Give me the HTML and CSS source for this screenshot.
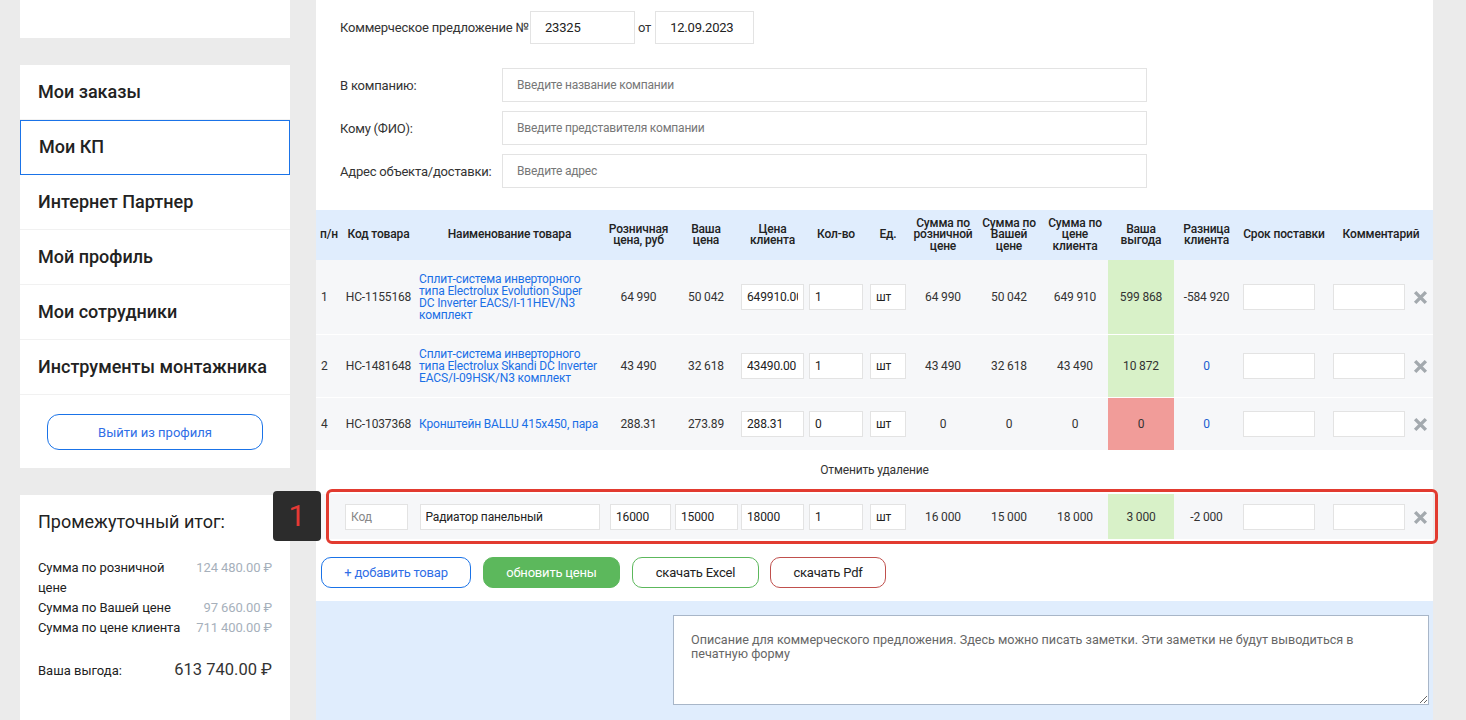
FILE: index.html
```html
<!DOCTYPE html>
<html lang="ru">
<head>
<meta charset="utf-8">
<title>Мои КП</title>
<link rel="stylesheet" href="styles.css">
</head>
<body>
<div class="page">
  <aside class="sidebar">
    <div class="card top-card"></div>
    <nav class="card menu">
      <a class="menu-item">Мои заказы</a>
      <a class="menu-item active">Мои КП</a>
      <a class="menu-item">Интернет Партнер</a>
      <a class="menu-item">Мой профиль</a>
      <a class="menu-item">Мои сотрудники</a>
      <a class="menu-item">Инструменты монтажника</a>
      <div class="logout-wrap"><button class="logout">Выйти из профиля</button></div>
    </nav>
    <div class="card subtotal">
      <div class="subtotal-title">Промежуточный итог:</div>
      <div class="sum-grid">
        <span class="sum-label">Сумма по розничной цене</span><span class="sum-val">124 480.00 ₽</span>
        <span class="sum-label">Сумма по Вашей цене</span><span class="sum-val">97 660.00 ₽</span>
        <span class="sum-label">Сумма по цене клиента</span><span class="sum-val">711 400.00 ₽</span>
      </div>
      <div class="benefit">
        <span class="benefit-label">Ваша выгода:</span>
        <span class="benefit-val">613 740.00 ₽</span>
      </div>
    </div>
  </aside>

  <main class="main">
    <div class="form">
      <div class="kp-row">
        <span class="kp-label">Коммерческое предложение №</span>
        <input class="field kp-num" value="23325">
        <span class="kp-ot">от</span>
        <input class="field kp-date" value="12.09.2023">
      </div>
      <div class="form-grid">
        <label class="f-label">В компанию:</label>
        <input class="field wide" placeholder="Введите название компании">
        <label class="f-label">Кому (ФИО):</label>
        <input class="field wide" placeholder="Введите представителя компании">
        <label class="f-label">Адрес объекта/доставки:</label>
        <input class="field wide" placeholder="Введите адрес">
      </div>
    </div>

    <table class="grid">
      <colgroup>
        <col class="c-n"><col class="c-code"><col class="c-name"><col class="c-ret"><col class="c-your"><col class="c-cli">
        <col class="c-qty"><col class="c-unit"><col class="c-s1"><col class="c-s2"><col class="c-s3"><col class="c-ben">
        <col class="c-diff"><col class="c-term"><col class="c-com">
      </colgroup>
      <thead>
        <tr>
          <th class="t-left">п/н</th>
          <th>Код товара</th>
          <th>Наименование товара</th>
          <th>Розничная цена, руб</th>
          <th class="tight">Ваша цена</th>
          <th>Цена клиента</th>
          <th>Кол-во</th>
          <th>Ед.</th>
          <th>Сумма по розничной цене</th>
          <th>Сумма по Вашей цене</th>
          <th>Сумма по цене клиента</th>
          <th>Ваша выгода</th>
          <th>Разница клиента</th>
          <th>Срок поставки</th>
          <th>Комментарий</th>
        </tr>
      </thead>
      <tbody>
        <tr>
          <td class="num">1</td>
          <td>НС-1155168</td>
          <td class="name"><a>Сплит-система инверторного типа Electrolux Evolution Super DC Inverter EACS/I-11HEV/N3 комплект</a></td>
          <td>64 990</td>
          <td>50 042</td>
          <td><input class="cell-in w-price" value="649910.00"></td>
          <td><input class="cell-in w-qty" value="1"></td>
          <td><input class="cell-in w-unit" value="шт"></td>
          <td>64 990</td>
          <td>50 042</td>
          <td>649 910</td>
          <td class="good">599 868</td>
          <td>-584 920</td>
          <td class="t-left pad4"><input class="cell-in w-text"></td>
          <td class="t-left pad4"><div class="com"><input class="cell-in w-text"><svg class="del" viewBox="0 0 14 14" width="15" height="15"><path d="M2 2L12 12M12 2L2 12" stroke="#a3a9ae" stroke-width="3.2"/></svg></div></td>
        </tr>
        <tr>
          <td class="num">2</td>
          <td>НС-1481648</td>
          <td class="name"><a>Сплит-система инверторного типа Electrolux Skandi DC Inverter EACS/I-09HSK/N3 комплект</a></td>
          <td>43 490</td>
          <td>32 618</td>
          <td><input class="cell-in w-price" value="43490.00"></td>
          <td><input class="cell-in w-qty" value="1"></td>
          <td><input class="cell-in w-unit" value="шт"></td>
          <td>43 490</td>
          <td>32 618</td>
          <td>43 490</td>
          <td class="good">10 872</td>
          <td class="blue">0</td>
          <td class="t-left pad4"><input class="cell-in w-text"></td>
          <td class="t-left pad4"><div class="com"><input class="cell-in w-text"><svg class="del" viewBox="0 0 14 14" width="15" height="15"><path d="M2 2L12 12M12 2L2 12" stroke="#a3a9ae" stroke-width="3.2"/></svg></div></td>
        </tr>
        <tr>
          <td class="num">4</td>
          <td>НС-1037368</td>
          <td class="name one-line"><a>Кронштейн BALLU 415x450, пара</a></td>
          <td>288.31</td>
          <td>273.89</td>
          <td><input class="cell-in w-price" value="288.31"></td>
          <td><input class="cell-in w-qty" value="0"></td>
          <td><input class="cell-in w-unit" value="шт"></td>
          <td>0</td>
          <td>0</td>
          <td>0</td>
          <td class="bad">0</td>
          <td class="blue">0</td>
          <td class="t-left pad4"><input class="cell-in w-text"></td>
          <td class="t-left pad4"><div class="com"><input class="cell-in w-text"><svg class="del" viewBox="0 0 14 14" width="15" height="15"><path d="M2 2L12 12M12 2L2 12" stroke="#a3a9ae" stroke-width="3.2"/></svg></div></td>
        </tr>
      </tbody>
    </table>

    <div class="undo">Отменить удаление</div>

    <table class="grid new-grid">
      <colgroup>
        <col class="c-n"><col class="c-code"><col class="c-name"><col class="c-ret"><col class="c-your"><col class="c-cli">
        <col class="c-qty"><col class="c-unit"><col class="c-s1"><col class="c-s2"><col class="c-s3"><col class="c-ben">
        <col class="c-diff"><col class="c-term"><col class="c-com">
      </colgroup>
      <tbody>
        <tr class="new-row">
          <td></td>
          <td class="code-cell"><input class="cell-in w-code" placeholder="Код"></td>
          <td><input class="cell-in w-name" value="Радиатор панельный"></td>
          <td class="np-cell"><input class="cell-in w-np" value="16000"></td>
          <td><input class="cell-in w-price" value="15000"></td>
          <td><input class="cell-in w-price" value="18000"></td>
          <td><input class="cell-in w-qty" value="1"></td>
          <td><input class="cell-in w-unit" value="шт"></td>
          <td>16 000</td>
          <td>15 000</td>
          <td>18 000</td>
          <td class="good">3 000</td>
          <td>-2 000</td>
          <td class="t-left pad4"><input class="cell-in w-text"></td>
          <td class="t-left pad4"><div class="com"><input class="cell-in w-text"><svg class="del" viewBox="0 0 14 14" width="15" height="15"><path d="M2 2L12 12M12 2L2 12" stroke="#a3a9ae" stroke-width="3.2"/></svg></div></td>
        </tr>
      </tbody>
    </table>

    <div class="actions">
      <button class="btn btn-add">+ добавить товар</button>
      <button class="btn btn-update">обновить цены</button>
      <button class="btn btn-excel">скачать Excel</button>
      <button class="btn btn-pdf">скачать Pdf</button>
    </div>

    <div class="notes">
      <textarea class="notes-area" placeholder="Описание для коммерческого предложения. Здесь можно писать заметки. Эти заметки не будут выводиться в печатную форму"></textarea>
    </div>

    <div class="mark-box"></div>
    <div class="mark-badge">1</div>
  </main>
</div>
</body>
</html>
```

FILE: styles.css
```css
* { box-sizing: border-box; }
html, body { margin: 0; height: 720px; overflow: hidden; }
body {
  background: #ebebeb;
  font-family: Roboto, "Liberation Sans", sans-serif;
  color: #222;
}
.page {
  display: flex;
  align-items: flex-start;
  gap: 26px;
  padding-left: 20px;
}

/* Sidebar */
.sidebar {
  width: 270px;
  display: flex;
  flex-direction: column;
  gap: 27px;
}
.card { background: #fff; }
.top-card { height: 38px; }
.menu { display: flex; flex-direction: column; }
.menu-item {
  height: 55px;
  display: flex;
  align-items: center;
  padding-left: 18px;
  padding-bottom: 2px;
  font-size: 18px;
  font-weight: 500;
  color: #222;
  border-bottom: 1px solid #f1f1f1;
}
.menu-item.active {
  border: 1px solid #1a73e8;
  padding-left: 18px;
}
.logout-wrap { padding: 19px 27px 18px; }
.logout {
  width: 216px;
  height: 36px;
  border: 1px solid #1a73e8;
  border-radius: 12px;
  background: #fff;
  color: #2f6ee6;
  font-family: Roboto, sans-serif;
  font-size: 13px;
}
.subtotal {
  padding: 16px 18px 0 18px;
  height: 260px;
}
.subtotal-title {
  font-size: 18px;
  line-height: 22px;
  color: #222;
}
.sum-grid {
  margin-top: 25px;
  display: grid;
  grid-template-columns: 150px 1fr;
  font-size: 13px;
  line-height: 20px;
  letter-spacing: -0.1px;
}
.sum-label { color: #222; }
.sum-val { text-align: right; color: #a6b0bb; white-space: nowrap; }
.benefit {
  margin-top: 21px;
  display: flex;
  justify-content: space-between;
  align-items: center;
}
.benefit-label { font-size: 13px; }
.benefit-val { font-size: 16.5px; line-height: 22px; color: #333; }

/* Main */
.main {
  width: 1117px;
  background: #fff;
  position: relative;
}
.form { padding: 11px 0 0 24px; letter-spacing: -0.2px; }
.kp-row {
  display: flex;
  align-items: center;
  height: 33px;
  font-size: 13px;
  color: #333;
}
.kp-label { width: 190px; white-space: nowrap; }
.field {
  border: 1px solid #e3e3e3;
  background: #fff;
  font-family: Roboto, sans-serif;
  font-size: 13px;
  color: #222;
  padding: 0 14px;
  outline: none;
  letter-spacing: -0.2px;
}
.kp-num { width: 105px; height: 33px; }
.kp-ot { margin: 0 4px 0 3px; }
.kp-date { width: 99px; height: 33px; }
.form-grid {
  margin-top: 24px;
  display: grid;
  grid-template-columns: 162px 645px;
  row-gap: 9px;
  align-items: center;
}
.f-label { font-size: 13px; color: #333; }
.wide { height: 34px; font-size: 12px; }
.wide::placeholder { color: #777; }

/* Table */
.grid {
  margin-top: 22px;
  width: 1117px;
  table-layout: fixed;
  border-collapse: collapse;
  font-size: 12px;
  letter-spacing: -0.15px;
}
.c-n { width: 26px; }
.c-code { width: 73px; }
.c-name { width: 189px; }
.c-ret { width: 69px; }
.c-your { width: 66px; }
.c-cli { width: 67px; }
.c-qty { width: 60px; }
.c-unit { width: 44px; }
.c-s1, .c-s2, .c-s3, .c-ben { width: 66px; }
.c-diff { width: 65px; }
.c-term { width: 90px; }
.c-com { width: 104px; }

.grid thead th {
  background: #e0edfd;
  height: 50px;
  font-weight: 500;
  line-height: 11.5px;
  padding: 0 2px;
  color: #222;
  text-align: center;
  vertical-align: middle;
}
.grid thead th.t-left { text-align: left; padding-left: 4px; }
.grid thead th.tight { padding: 0 12px; }
.grid tbody td {
  background: #f6f7f9;
  padding: 13px 2px;
  text-align: center;
  vertical-align: middle;
  color: #333;
  line-height: 12px;
  border-bottom: 1px solid #fff;
}
.grid tbody td.num { text-align: left; padding-left: 5px; }
.grid tbody td.name { text-align: left; padding-left: 4px; padding-right: 6px; }
.grid tbody td.one-line { white-space: nowrap; }
.name a { color: #1a6fe6; }
.grid tbody td.t-left { text-align: left; }
.grid tbody td.pad4 { padding-left: 4px; }
.grid tbody td.good { background: #d8f1c8; }
.grid tbody td.bad { background: #f19c99; }
.grid tbody td.blue { color: #1a5fd0; }
.grid tbody td.code-cell { text-align: left; padding-left: 3px; }
.grid tbody td.np-cell { text-align: left; padding-left: 6px; }

.cell-in {
  display: inline-block;
  height: 26px;
  border: 1px solid #e3e3e3;
  background: #fff;
  font-family: Roboto, sans-serif;
  font-size: 12px;
  color: #222;
  padding: 0 5px;
  vertical-align: middle;
  outline: none;
  letter-spacing: -0.15px;
}
.w-price { width: 63px; }
.w-np { width: 61px; }
.w-qty { width: 54px; }
.w-unit { width: 36px; }
.w-text { width: 72px; }
.w-code { width: 63px; }
.w-name { width: 180px; }
.cell-in::placeholder { color: #888; }
.com { display: flex; align-items: center; }
.del { margin-left: 8px; flex: none; }

.undo {
  height: 39px;
  line-height: 39px;
  text-align: center;
  font-size: 12px;
  color: #333;
  letter-spacing: -0.15px;
}
.new-grid { margin-top: 4px; }
.grid tbody .new-row td { padding-top: 10px; padding-bottom: 9px; }

.actions {
  margin-top: 17px;
  padding-left: 5px;
  display: flex;
  gap: 12px;
  padding-bottom: 13px;
}
.btn {
  height: 31px;
  border-radius: 10px;
  background: #fff;
  font-family: Roboto, sans-serif;
  font-size: 13px;
  color: #222;
  border: 1px solid #ccc;
  letter-spacing: -0.2px;
}
.btn-add { width: 150px; border-color: #1a73e8; color: #2f6ee6; }
.btn-update { width: 137px; background: #5cb85c; border-color: #5cb85c; color: #fff; }
.btn-excel { width: 127px; border-color: #5cb85c; }
.btn-pdf { width: 116px; border-color: #c0504d; margin-left: -1px; }

.notes {
  background: #e0edfd;
  padding: 14px 4px 20px 0;
  display: flex;
  justify-content: flex-end;
}
.notes-area {
  width: 756px;
  height: 90px;
  border: 1px solid #a8b6c8;
  background: #fff;
  padding: 17px 17px;
  font-family: Roboto, sans-serif;
  font-size: 12.6px;
  line-height: 14px;
  resize: vertical;
}
.notes-area::placeholder { color: #666; }

/* annotation overlays */
.mark-box {
  position: absolute;
  left: 10px;
  top: 489px;
  width: 1112px;
  height: 55px;
  border: 3px solid #e23b30;
  border-radius: 6px;
  pointer-events: none;
}
.mark-badge {
  position: absolute;
  left: -43px;
  top: 491px;
  width: 48px;
  height: 50px;
  background: #2c2c2c;
  border-radius: 4px;
  color: #e53935;
  font-size: 30px;
  line-height: 50px;
  text-align: center;
}
```
